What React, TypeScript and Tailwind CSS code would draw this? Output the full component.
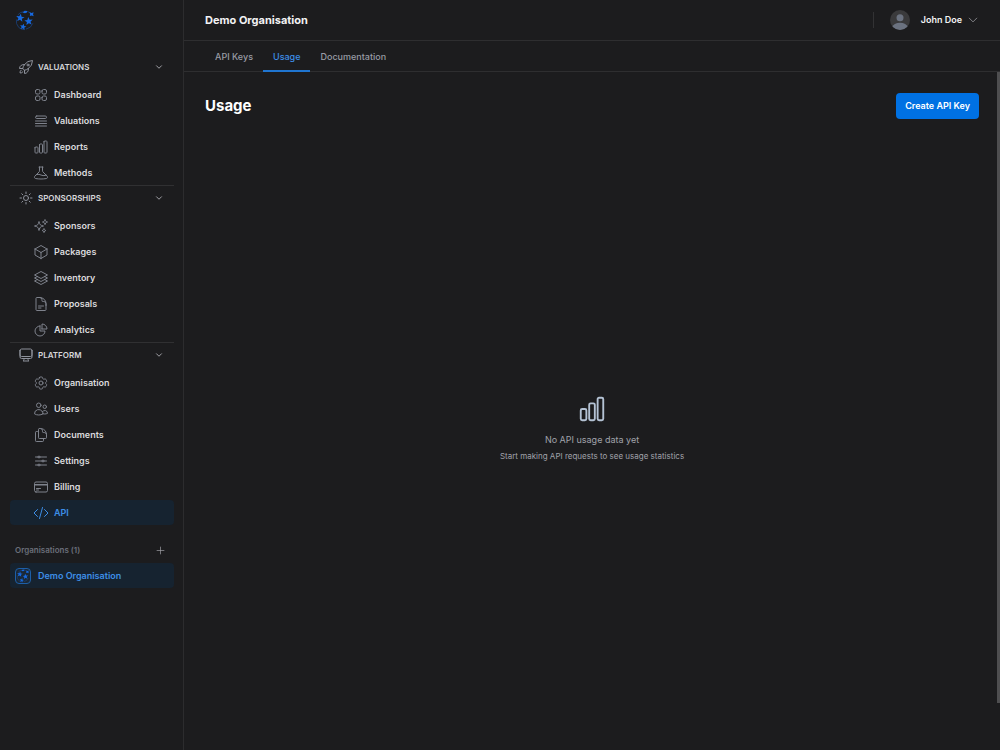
import type { ReactNode } from "react";
import type { IconType } from "react-icons";
import {
  HiOutlineAdjustmentsHorizontal,
  HiOutlineBeaker,
  HiOutlineChartBar,
  HiOutlineChartPie,
  HiOutlineChevronDown,
  HiOutlineCodeBracket,
  HiOutlineCog6Tooth,
  HiOutlineComputerDesktop,
  HiOutlineCreditCard,
  HiOutlineCube,
  HiOutlineDocumentDuplicate,
  HiOutlineDocumentText,
  HiOutlinePlus,
  HiOutlineQueueList,
  HiOutlineRocketLaunch,
  HiOutlineSparkles,
  HiOutlineSquare3Stack3D,
  HiOutlineSquares2X2,
  HiOutlineSun,
  HiOutlineUsers,
} from "react-icons/hi2";

type NavItem = { label: string; icon: IconType; active?: boolean };
type NavGroup = { title: string; icon: IconType; items: NavItem[] };

const groups: NavGroup[] = [
  {
    title: "VALUATIONS",
    icon: HiOutlineRocketLaunch,
    items: [
      { label: "Dashboard", icon: HiOutlineSquares2X2 },
      { label: "Valuations", icon: HiOutlineQueueList },
      { label: "Reports", icon: HiOutlineChartBar },
      { label: "Methods", icon: HiOutlineBeaker },
    ],
  },
  {
    title: "SPONSORSHIPS",
    icon: HiOutlineSun,
    items: [
      { label: "Sponsors", icon: HiOutlineSparkles },
      { label: "Packages", icon: HiOutlineCube },
      { label: "Inventory", icon: HiOutlineSquare3Stack3D },
      { label: "Proposals", icon: HiOutlineDocumentText },
      { label: "Analytics", icon: HiOutlineChartPie },
    ],
  },
  {
    title: "PLATFORM",
    icon: HiOutlineComputerDesktop,
    items: [
      { label: "Organisation", icon: HiOutlineCog6Tooth },
      { label: "Users", icon: HiOutlineUsers },
      { label: "Documents", icon: HiOutlineDocumentDuplicate },
      { label: "Settings", icon: HiOutlineAdjustmentsHorizontal },
      { label: "Billing", icon: HiOutlineCreditCard },
      { label: "API", icon: HiOutlineCodeBracket, active: true },
    ],
  },
];

const STAR =
  "M0 -4 L1.1 -1.3 L4 -1.2 L1.7 0.6 L2.5 3.4 L0 1.8 L-2.5 3.4 L-1.7 0.6 L-4 -1.2 L-1.1 -1.3 Z";

function StarBall({ className }: { className: string }) {
  return (
    <svg viewBox="0 0 20 22" className={className} fill="currentColor" aria-hidden="true">
      <path d={STAR} transform="translate(5 8.2) rotate(8) scale(1.1)" />
      <path d={STAR} transform="translate(13.8 11.8) rotate(-6) scale(1.1)" />
      <path d={STAR} transform="translate(8 17.6) rotate(12) scale(.85)" />
      <path d="M14.6 2.2 L16.8 3.2 L19 2.4 L18.4 4.6 L19.2 6.6 L17 5.8 L15 6.4 L15.4 4.4 Z" />
      <path d="M7.4 2.6 L9.6 .8 L12.4 1.1 L12 2.7 L10 3.5 Z" />
      <g fill="none" stroke="currentColor" strokeWidth=".9" opacity=".45">
        <path d="M2.4 5.2 Q5 2 8.4 1.8" />
        <path d="M12.4 1.4 L15.6 3" />
        <path d="M1 10 Q.2 14.5 3.4 18.2 Q6 20.6 9.4 20.6" />
        <path d="M11 20 Q16.5 19 18.2 14" />
      </g>
    </svg>
  );
}

function NavGroupSection({ group, divided }: { group: NavGroup; divided: boolean }) {
  const Icon = group.icon;
  return (
    <section className={divided ? "border-t border-[#303032]" : ""}>
      <button type="button" className="flex h-6 w-full items-center pr-[11px] pl-2">
        <Icon className="size-4 text-[#8e929c]" />
        <span className="ml-1 text-[8px] font-semibold text-[#d6d6d9]">{group.title}</span>
        <HiOutlineChevronDown className="ml-auto size-2 text-[#a0a0a6]" strokeWidth={3} />
      </button>
      <ul className="mt-[3px] flex flex-col gap-px">
        {group.items.map((item) => (
          <li key={item.label}>
            <a
              href="#"
              className={
                item.active
                  ? "flex h-[25px] items-center gap-[5px] rounded bg-[#162330] pl-[23px] text-[#3d8ee6]"
                  : "flex h-[25px] items-center gap-[5px] rounded pl-[23px] text-[#dadadd]"
              }
            >
              <item.icon className={item.active ? "size-4" : "size-4 text-[#7e828c]"} />
              <span className="text-[9px] font-semibold">{item.label}</span>
            </a>
          </li>
        ))}
      </ul>
    </section>
  );
}

function Sidebar() {
  return (
    <aside className="flex w-[184px] shrink-0 flex-col border-r border-[#2c2c2e] pr-[9px] pl-[10px]">
      <a href="#" aria-label="Home" className="mt-[10px] mb-6 flex pl-[5px] text-[#1769e0]">
        <StarBall className="h-[21px] w-5" />
      </a>

      <nav aria-label="Main">
        {groups.map((group, i) => (
          <NavGroupSection key={group.title} group={group} divided={i > 0} />
        ))}
      </nav>

      {/* Organisations */}
      <div className="mt-3 flex h-[26px] items-center justify-between pr-2 pl-[5px]">
        <span className="text-[8px] font-semibold text-[#6b6f7a]">Organisations (1)</span>
        <button type="button" aria-label="Add organisation" className="text-[#a0a0a6]">
          <HiOutlinePlus className="size-[11px]" />
        </button>
      </div>
      <a
        href="#"
        className="flex h-[25px] items-center gap-[7px] rounded bg-[#162330] pl-[5px] text-[#3d8ee6]"
      >
        <span className="flex size-4 items-center justify-center rounded border border-[#1d5fa8] bg-[#1b2836] text-[#1769e0]">
          <StarBall className="size-[14px]" />
        </span>
        <span className="text-[9px] font-semibold">Demo Organisation</span>
      </a>
    </aside>
  );
}

function Tab({ active, children }: { active?: boolean; children: ReactNode }) {
  return (
    <a
      href="#"
      className={
        active
          ? "-mb-px flex items-center border-b-2 border-[#1f75d1] px-[10px] pt-0.5 text-[#3d8ee6]"
          : "-mb-px flex items-center border-b-2 border-transparent px-[10px] pt-0.5 text-[#989ba4]"
      }
    >
      {children}
    </a>
  );
}

function Header() {
  return (
    <header className="flex h-[41px] items-center justify-between border-b border-[#2e2e30] px-[21px]">
      <span className="text-[11px] font-bold text-[#f2f2f4]">Demo Organisation</span>
      <div className="flex items-center">
        <div className="mr-4 h-4 w-px bg-[#323234]" />
        <button type="button" className="flex items-center text-[#f2f2f4]">
          <svg viewBox="0 0 20 20" className="size-5 rounded-full" aria-hidden="true">
            <rect width="20" height="20" fill="#3a3a3c" />
            <circle cx="10" cy="7.8" r="3.5" fill="#6b7280" />
            <path d="M1.5 17.5 Q4 12.8 10 12.8 T18.5 17.5 L16 20 H4 Z" fill="#6b7280" />
          </svg>
          <span className="ml-[11px] text-[9px] font-semibold">John Doe</span>
          <HiOutlineChevronDown className="ml-[5px] size-3 text-[#a0a0a6]" />
        </button>
      </div>
    </header>
  );
}

export default function App() {
  return (
    <div className="flex min-h-screen bg-[#1c1c1e] font-['Inter','Liberation_Sans',sans-serif] text-white">
      <Sidebar />

      <div className="flex min-w-0 flex-1 flex-col">
        <Header />

        <nav
          aria-label="API"
          className="flex h-[31px] border-b border-[#2e2e30] pl-[21px] text-[9px] font-medium"
        >
          <Tab>API Keys</Tab>
          <Tab active>Usage</Tab>
          <Tab>Documentation</Tab>
        </nav>

        <div className="flex flex-1">
          <main className="flex flex-1 flex-col pt-[21px] pr-[18px] pb-3 pl-[21px]">
            <div className="flex items-center justify-between">
              <h1 className="text-[15px] leading-6 font-bold">Usage</h1>
              <button
                type="button"
                className="h-[26px] rounded bg-[#0071e3] px-[9px] text-[9px] font-semibold"
              >
                Create API Key
              </button>
            </div>

            {/* Empty state */}
            <div className="flex flex-1 flex-col items-center justify-center text-center">
              <HiOutlineChartBar className="size-[30px] text-[#b4c2d4]" />
              <p className="mt-2 text-[9px] leading-4 text-[#a0a2aa]">No API usage data yet</p>
              <p className="text-[8px] leading-4 text-[#a0a2aa]">
                Start making API requests to see usage statistics
              </p>
            </div>
          </main>

          {/* Scroll track */}
          <div className="w-[3px]" aria-hidden="true">
            <div className="h-[93%] bg-[#4e4e50]" />
          </div>
        </div>
      </div>
    </div>
  );
}
